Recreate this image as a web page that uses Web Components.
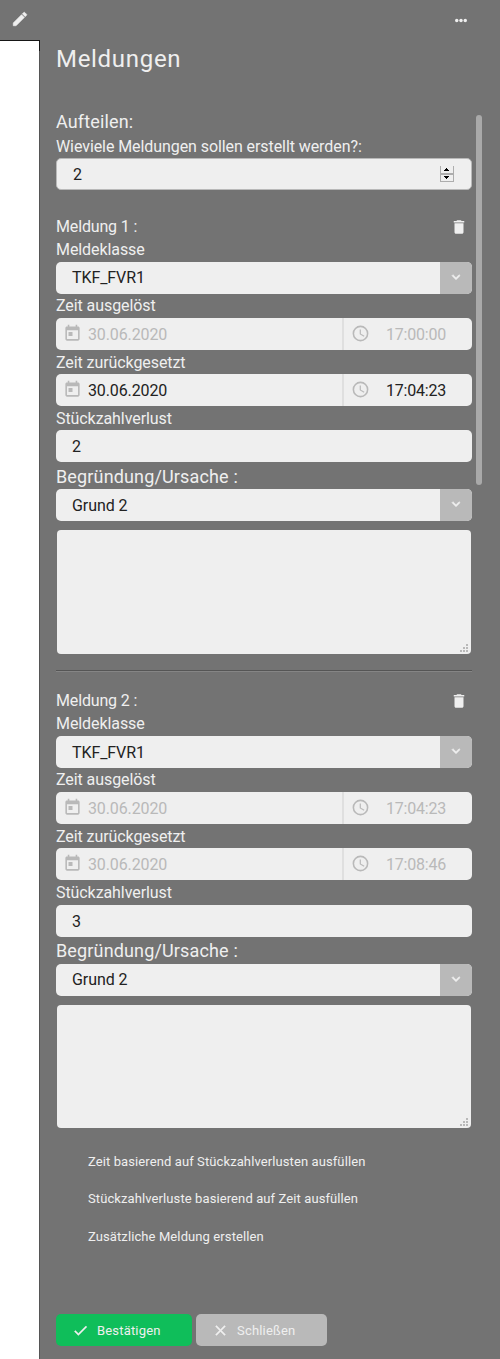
<!DOCTYPE html>
<html lang="de">
<head>
<meta charset="utf-8">
<title>Meldungen</title>
<style>
body { margin: 0; background: #fff; font: 16px Roboto, sans-serif; color: #efefef; letter-spacing: -.08px; }
</style>
</head>
<body>
<app-shell></app-shell>
<script>
const define = (name, html) => customElements.define(name, class extends HTMLElement {
  constructor() {
    super();
    this.attachShadow({ mode: 'open' });
  }
  connectedCallback() {
    const t = document.createElement('template');
    t.innerHTML = (typeof html === 'function' ? html(this) : html);
    this.shadowRoot.replaceChildren(t.content.cloneNode(true));
  }
});

const ICONS = {
  pencil: '<path stroke="currentColor" stroke-width=".8" d="M3 17.250V21h3.750L17.800 9.940l-3.750-3.750zM20.700 7.050c.4-.4.4-1.020 0-1.410l-2.340-2.340a1 1 0 0 0-1.410 0l-1.830 1.830 3.750 3.750z"/>',
  trash: '<path d="M6 19c0 1.100.9 2 2 2h8c1.100 0 2-.9 2-2V7H6zM19 4h-3.500l-1-1h-5l-1 1H5v2h14z"/>',
  calendar: '<path d="M19 3h-1V1h-2v2H8V1H6v2H5c-1.100 0-2 .9-2 2v14c0 1.100.9 2 2 2h14c1.100 0 2-.9 2-2V5c0-1.100-.9-2-2-2m0 16H5V8h14zM7 10h5v5H7z"/>',
  clock: '<path d="M12 2a10 10 0 1 0 0 20 10 10 0 0 0 0-20m0 18a8 8 0 1 1 0-16 8 8 0 0 1 0 16M12.500 7H11v6l5.250 3.150.75-1.230-4.500-2.670z"/>',
  chevron: '<path stroke="currentColor" stroke-width="1" d="M7.410 8.590 12 13.170l4.590-4.580L18 10l-6 6-6-6z"/>',
  dots: '<circle cx="5.600" cy="12.700" r="2.600"/><circle cx="12" cy="12.700" r="2.600"/><circle cx="18.400" cy="12.700" r="2.600"/>',
  check: '<path stroke="currentColor" stroke-width=".6" d="M9 16.170 4.830 12l-1.420 1.410L9 19 21 7l-1.410-1.410z"/>',
  close: '<path stroke="currentColor" stroke-width=".6" d="M19 6.410 17.590 5 12 10.590 6.410 5 5 6.410 10.590 12 5 17.590 6.410 19 12 13.410 17.590 19 19 17.590 13.410 12z"/>'
};

define('ui-icon', el => `
  <style>:host{display:block;flex:none} svg{display:block;fill:currentColor}</style>
  <svg width="${el.getAttribute('size')}" height="${el.getAttribute('size')}" viewBox="0 0 24 24">${ICONS[el.getAttribute('name')]}</svg>`);

define('ui-label', `
  <style>
    :host{display:block;height:24px;line-height:24px;white-space:nowrap}
    :host([low]){line-height:26px}
    :host([large]){font-size:18px;height:27px;line-height:29px;letter-spacing:.15px}
  </style><slot></slot>`);

define('number-field', `
  <style>
    :host{display:flex;box-sizing:border-box;height:32px;border:1px solid #b9b9b9;border-radius:5px;background:#efefef;
      color:#222;align-items:center;justify-content:space-between;padding:0 17px 0 16px;line-height:30px}
    span{padding-top:1px}
    svg{display:block}
  </style>
  <span><slot></slot></span>
  <svg width="14" height="16">
    <rect width="14" height="16" fill="#adadad"/><rect x="1" width="12" height="7" fill="#efefef"/><rect x="1" y="9" width="12" height="6" fill="#efefef"/>
    <path d="M6 2h1v1h1v1h1v1H4V4h1V3h1zM4 10h5v1H8v1H7v1H6v-1H5v-1H4z"/>
  </svg>`);

define('text-field', `
  <style>:host{display:block;height:32px;line-height:34px;border-radius:5px;background:#efefef;color:#222;padding-left:16px}</style>
  <slot></slot>`);

define('select-field', `
  <style>
    :host{display:flex;height:32px;line-height:32px;border-radius:5px;overflow:hidden;background:#efefef;color:#222}
    :host([low]){line-height:34px}
    .v{flex:1;padding-left:16px}
    .b{width:32px;background:#b9b9b9;color:#efefef;display:flex;justify-content:center;padding-top:7px;box-sizing:border-box}
  </style>
  <div class="v"><slot></slot></div><div class="b"><ui-icon name="chevron" size="16"></ui-icon></div>`);

define('datetime-field', el => `
  <style>
    :host{display:flex;height:32px;line-height:34px;border-radius:5px;background:#efefef;color:#222}
    :host([disabled]){color:#b9b9b9}
    div{display:flex;box-sizing:border-box}
    .d{width:286px;padding-left:6.500px;gap:6.500px}
    .d span{letter-spacing:-.12px}
    .t{flex:1;border-left:2px solid #dfdfdf;padding-left:6.500px;gap:16.500px}
    .t span{letter-spacing:-.2px}
    ui-icon{color:#b9b9b9;margin-top:6px}
  </style>
  <div class="d"><ui-icon name="calendar" size="19"></ui-icon><span>${el.getAttribute('date')}</span></div>
  <div class="t"><ui-icon name="clock" size="19"></ui-icon><span>${el.getAttribute('time')}</span></div>`);

define('note-area', `
  <style>
    :host{display:flex;height:124px;margin:9px 1px 0;border-radius:4px;background:#efefef;justify-content:flex-end;align-items:flex-end}
    svg{display:block;margin:0 3px 2px 0}
  </style>
  <svg width="8" height="8" fill="#b9b9b9"><path d="M6 0h2v2H6zM3 3h2v2H3zM6 3h2v2H6zM0 6h2v2H0zM3 6h2v2H3zM6 6h2v2H6z"/></svg>`);

define('message-entry', el => {
  const last = el.hasAttribute('last');
  return `
  <style>
    :host{display:block}
    header{display:flex;justify-content:space-between;height:23px;line-height:23px}
    header span{letter-spacing:-.15px}
    header ui-icon{margin:3px 4px 0 0}
    :host([last]) text-field{margin-top:1px}
    :host([last]) ui-label[large]{line-height:27px}
    :host([last]) note-area{height:123px}
  </style>
  <header><span>Meldung ${el.getAttribute('number')} :</span><ui-icon name="trash" size="18"></ui-icon></header>
  <ui-label>Meldeklasse</ui-label>
  <select-field ${last ? 'low' : ''}>TKF_FVR1</select-field>
  <ui-label>Zeit ausgelöst</ui-label>
  <datetime-field disabled date="30.06.2020" time="${el.getAttribute('start')}"></datetime-field>
  <ui-label low>Zeit zurückgesetzt</ui-label>
  <datetime-field ${el.hasAttribute('editable') ? '' : 'disabled'} date="30.06.2020" time="${el.getAttribute('end')}"></datetime-field>
  <ui-label low>Stückzahlverlust</ui-label>
  <text-field>${el.getAttribute('loss')}</text-field>
  <ui-label large>Begründung/Ursache :</ui-label>
  <select-field ${last ? '' : 'low'}>Grund 2</select-field>
  <note-area></note-area>`;
});

define('link-action', `
  <style>:host{display:block;height:37px;line-height:38px;padding-left:32px;font-size:13px;letter-spacing:.1px}</style>
  <slot></slot>`);

define('ui-button', el => `
  <style>
    :host{display:flex;box-sizing:border-box;height:32px;line-height:33px;border-radius:5px;background:#b9b9b9;padding-left:16px;
      font-size:13px;letter-spacing:.18px;width:131px}
    :host([primary]){background:#0fbe5a;width:136px}
    ui-icon{margin:8px 8px 0 0}
  </style>
  <ui-icon name="${el.getAttribute('icon')}" size="17"></ui-icon><slot></slot>`);

define('app-shell', `
  <style>
    :host{display:grid;grid-template-columns:40px 460px;height:1359px}
    aside{box-sizing:border-box;border-right:1px solid #555}
    .tab{height:40px;width:40px;background:#737373;border-bottom:1px solid #161616;display:flex}
    .tab ui-icon{margin:10px 0 0 11px}
    .edge{width:1px;height:10px;margin-left:39px;background:#161616}
    main{background:#737373;box-sizing:border-box;padding-left:16px;display:flex;flex-direction:column}
    .menu{height:40px;display:flex;justify-content:flex-end}
    .menu ui-icon{margin:12px 31px 0 0}
    h1{margin:0;height:75px;font-size:24px;font-weight:400;line-height:39px;letter-spacing:.7px}
    .scroll{display:flex;gap:4px;height:1150px}
    .form{width:416px}
    .bar{width:6px;height:370px;border-radius:3px;background:#a9a9a9}
    .first{height:19px;line-height:14px}
    number-field{margin-bottom:25px}
    hr{margin:16px 0 17px;border:0;height:1px;background:#555;border-bottom:1px solid #858585}
    .links{margin-top:15px}
    .links link-action:last-child{margin-top:1px}
    footer{display:flex;gap:4px;margin-top:49px}
  </style>
  <aside><div class="tab"><ui-icon name="pencil" size="18"></ui-icon></div><div class="edge"></div></aside>
  <main>
    <div class="menu"><ui-icon name="dots" size="16"></ui-icon></div>
    <h1>Meldungen</h1>
    <div class="scroll">
      <div class="form">
        <ui-label large class="first">Aufteilen:</ui-label>
        <ui-label low>Wieviele Meldungen sollen erstellt werden?:</ui-label>
        <number-field>2</number-field>
        <message-entry number="1" start="17:00:00" end="17:04:23" loss="2" editable></message-entry>
        <hr>
        <message-entry number="2" start="17:04:23" end="17:08:46" loss="3" last></message-entry>
        <div class="links">
          <link-action>Zeit basierend auf Stückzahlverlusten ausfüllen</link-action>
          <link-action>Stückzahlverluste basierend auf Zeit ausfüllen</link-action>
          <link-action>Zusätzliche Meldung erstellen</link-action>
        </div>
      </div>
      <div class="bar"></div>
    </div>
    <footer>
      <ui-button primary icon="check">Bestätigen</ui-button>
      <ui-button icon="close">Schließen</ui-button>
    </footer>
  </main>`);
</script>
</body>
</html>
